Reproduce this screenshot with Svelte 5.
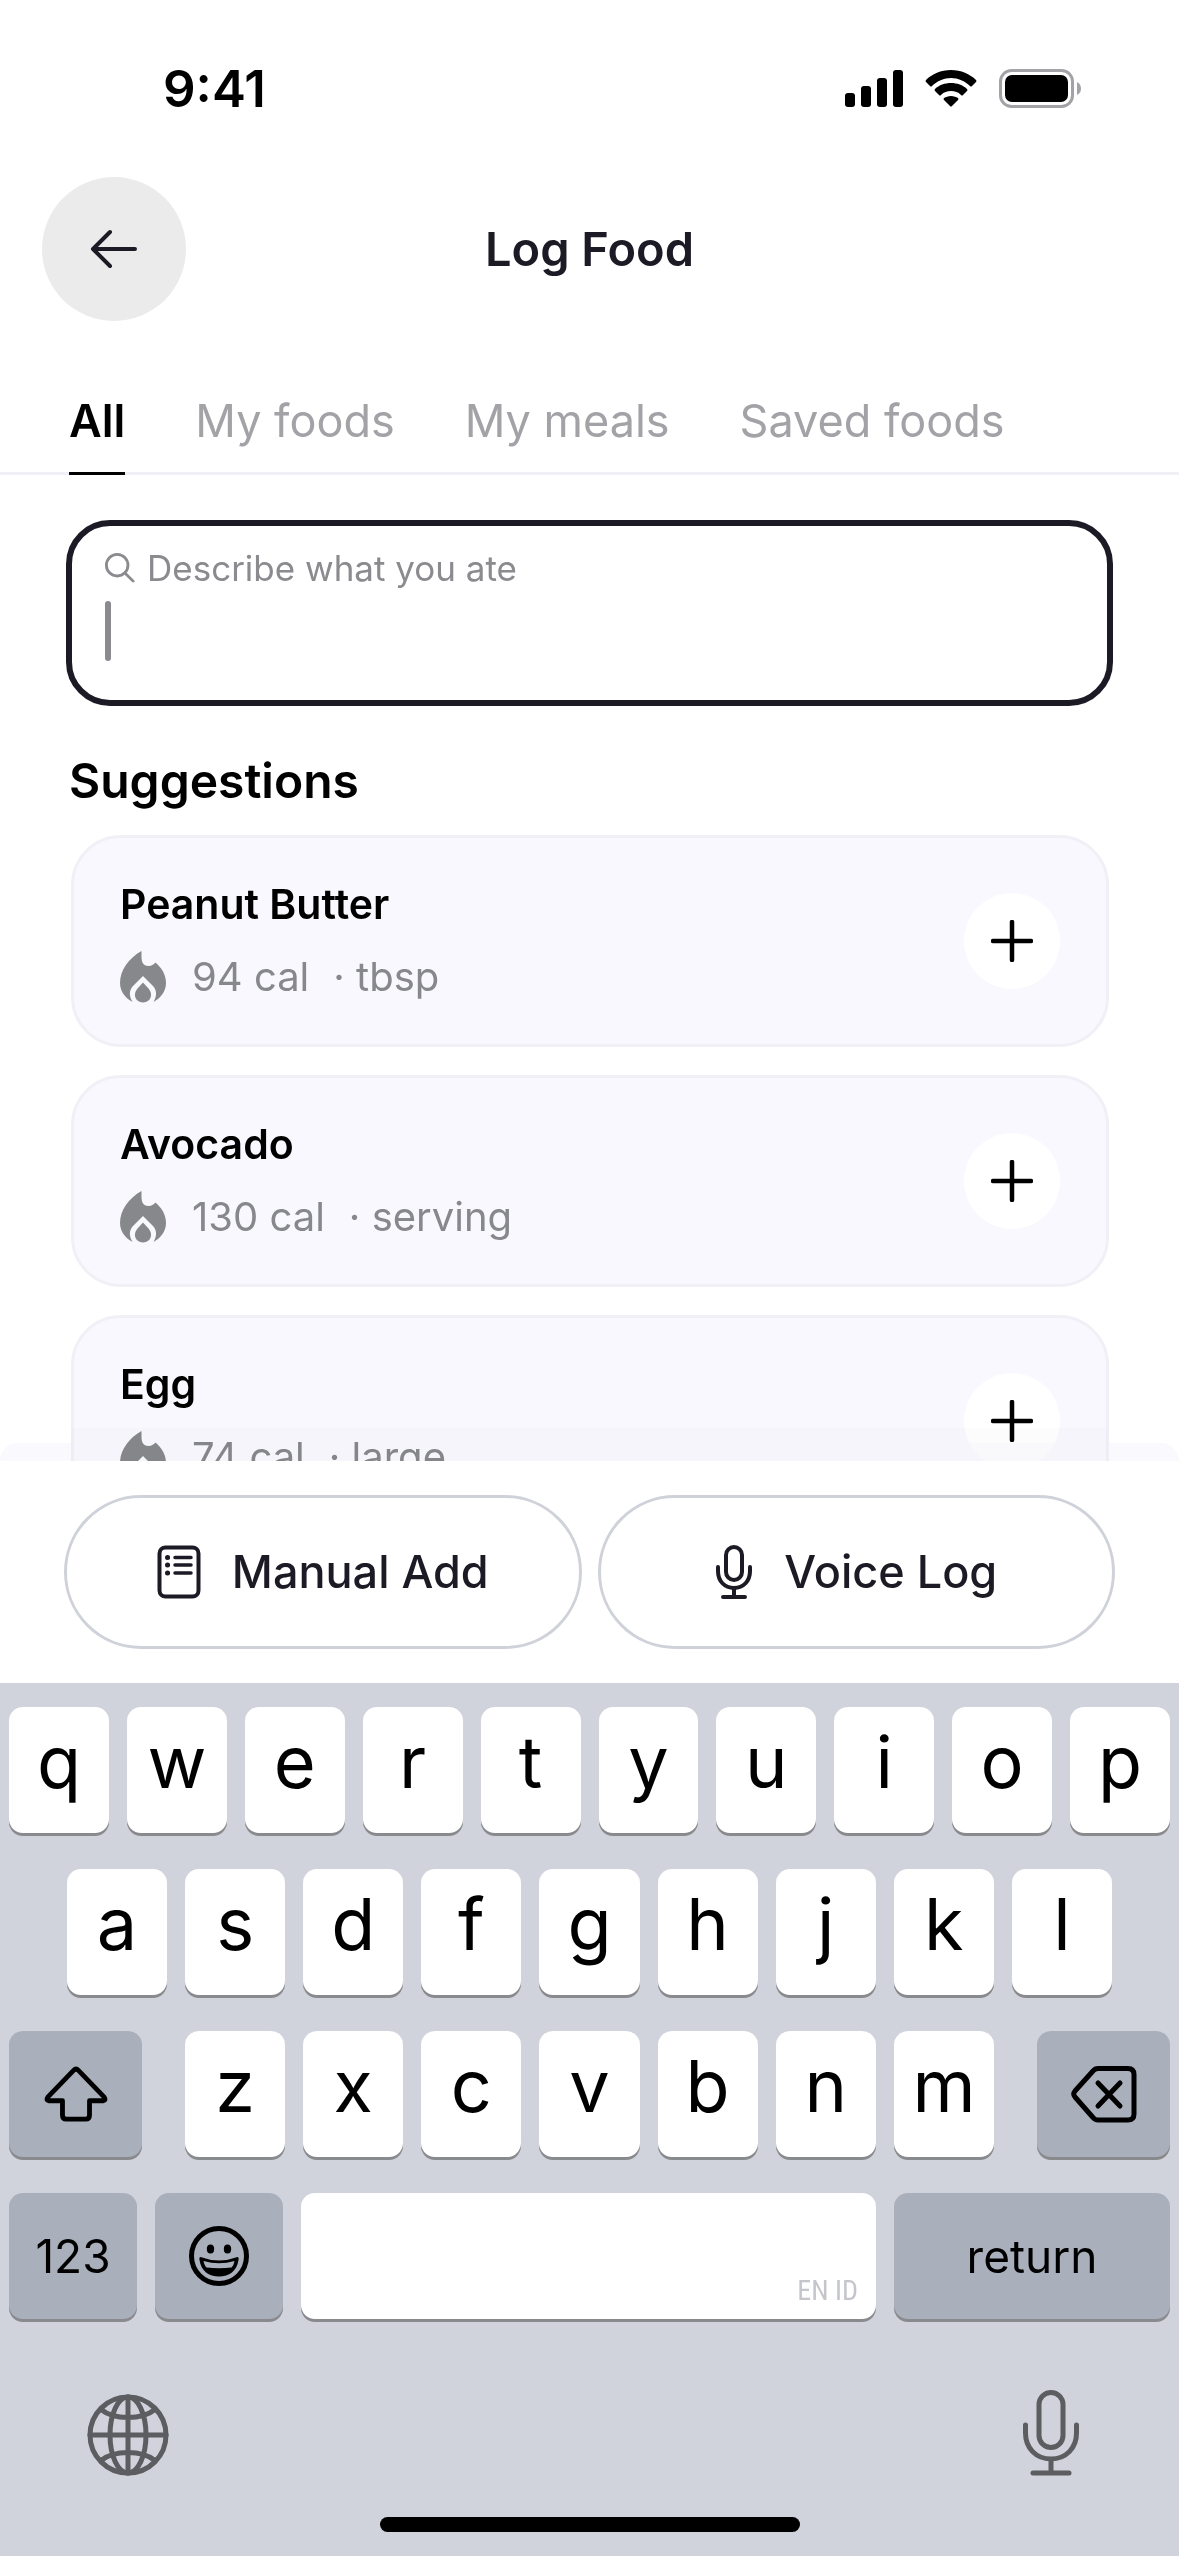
<script lang="ts">
    type Food = { name: string; calories: number; unit: string };

    const tabs = ["All", "My foods", "My meals", "Saved foods"];

    const foods: Food[] = [
        { name: "Peanut Butter", calories: 94, unit: "tbsp" },
        { name: "Avocado", calories: 130, unit: "serving" },
        { name: "Egg", calories: 74, unit: "large" },
    ];

    const topRow = [..."qwertyuiop"];
    const homeRow = [..."asdfghjkl"];
    const bottomRow = [..."zxcvbnm"];

    let activeTab = $state("All");
    let query = $state("");

    const type = (letter: string) => {
        query += letter;
    };

    const erase = () => {
        query = query.slice(0, -1);
    };
</script>

{#snippet letterKey(letter: string)}
    <button class="key" onclick={() => type(letter)}>{letter}</button>
{/snippet}

<div class="screen">
    <header class="status">
        <time>9:41</time>
        <div class="indicators">
            <svg width="58" height="38" viewBox="0 0 58 38" aria-hidden="true">
                <rect x="0" y="23" width="10" height="14" rx="3" />
                <rect x="16" y="16" width="10" height="21" rx="3" />
                <rect x="32" y="8" width="10" height="29" rx="3" />
                <rect x="48" y="0" width="10" height="37" rx="3" />
            </svg>
            <svg width="52" height="38" viewBox="0 0 52 38" aria-hidden="true">
                <path d="M26 0C36 0 45 4 51 10Q52 11 51 12L47 16Q46 17 45 16C40 11 33 8 26 8S12 11 7 16Q6 17 5 16L1 12Q0 11 1 10C7 4 16 0 26 0Z" />
                <path d="M26 13C32 13 38 15 42 19Q43 20 42 21L38 25Q37 26 36 25C33 22 30 21 26 21S19 22 16 25Q15 26 14 25L10 21Q9 20 10 19C14 15 20 13 26 13Z" />
                <path d="M26 26C29 26 31 27 33 28Q34 29 33 30L27 36Q26 37 25 36L19 30Q18 29 19 28C21 27 23 26 26 26Z" />
            </svg>
            <svg width="82" height="40" viewBox="0 0 82 40" aria-hidden="true">
                <rect x="1.5" y="1.5" width="72" height="36" rx="11" fill="none" stroke="#a2a2a7" stroke-width="3" />
                <rect x="6" y="6" width="63" height="27" rx="7" />
                <path d="M78 13Q82 15 82 19.500T78 26Z" fill="#a2a2a7" />
            </svg>
        </div>
    </header>

    <nav class="title-bar">
        <button class="back" aria-label="Back">
            <svg width="48" height="40" viewBox="0 0 48 40" aria-hidden="true">
                <path d="M45 20H3M20 3L3 20L20 37" fill="none" stroke="#1c1a24" stroke-width="4" stroke-linecap="round" stroke-linejoin="round" />
            </svg>
        </button>
        <h1>Log Food</h1>
    </nav>

    <div class="tabs" role="tablist">
        {#each tabs as tab}
            <button
                class="tab"
                class:active={tab === activeTab}
                role="tab"
                aria-selected={tab === activeTab}
                onclick={() => (activeTab = tab)}
            >
                {tab}
            </button>
        {/each}
    </div>

    <main>
        <div class="search">
            <label for="query">
                <svg width="30" height="30" viewBox="0 0 32 32" aria-hidden="true">
                    <circle cx="13" cy="13" r="11.500" />
                    <path d="M21.500 21.500L30 30" />
                </svg>
                Describe what you ate
            </label>
            <div class="entry">
                <span class="caret"></span>
                <input id="query" type="text" bind:value={query} />
            </div>
        </div>

        <h2>Suggestions</h2>
        <ul class="foods">
            {#each foods as food}
                <li class="food">
                    <div class="details">
                        <h3>{food.name}</h3>
                        <p>
                            <svg width="46" height="52" viewBox="0 0 46 52" aria-hidden="true">
                                <path d="M21.500 0V6C21.500 12 24 15 28.500 15C32 15 34 13 35.500 11.500C42 17 46 24 46 32C46 40 41 47 33.500 51C37.500 44 36.500 39 33 35L23 25L13 35C9.500 39 8.500 44 12.500 51C5 47 0 40 0 32C0 19 9 7 21.500 0Z" />
                                <path d="M23 31.500L28.500 37.500C33.500 43 31 51.500 23 51.500S12.500 43 17.500 37.500Z" />
                            </svg>
                            <span>{food.calories} cal</span>
                            <span class="unit">· {food.unit}</span>
                        </p>
                    </div>
                    <button class="add" aria-label="Add {food.name}">
                        <svg width="42" height="42" viewBox="0 0 42 42" aria-hidden="true">
                            <path d="M21 2V40M2 21H40" fill="none" stroke="#000" stroke-width="4.500" stroke-linecap="round" />
                        </svg>
                    </button>
                </li>
            {/each}
        </ul>
        <div class="list-shade"></div>
        <div class="sheet-edge"></div>
    </main>

    <div class="actions">
        <button class="action">
            <svg width="44" height="54" viewBox="0 0 44 54" aria-hidden="true">
                <rect x="2.500" y="2.500" width="39" height="49" rx="6" />
                <path d="M18 12.500H34M18 20H34M18 28H34" stroke-width="3.500" />
                <path d="M10.500 12.500H10.600M10.500 20H10.600M10.500 28H10.600" stroke-width="5" />
            </svg>
            Manual Add
        </button>
        <button class="action">
            <svg width="38" height="54" viewBox="0 0 38 54" aria-hidden="true">
                <rect x="11" y="2" width="16" height="33" rx="8" />
                <path d="M3 22V26C3 36 9.500 43 19 43S35 36 35 26V22M19 43V52M8 52H30" />
            </svg>
            Voice Log
        </button>
    </div>

    <section class="keyboard" aria-label="Keyboard">
        <div class="row">
            {#each topRow as letter}{@render letterKey(letter)}{/each}
        </div>
        <div class="row inset">
            {#each homeRow as letter}{@render letterKey(letter)}{/each}
        </div>
        <div class="row">
            <button class="key dark shift" aria-label="Shift">
                <svg width="64" height="56" viewBox="0 0 66 58" aria-hidden="true">
                    <path d="M30.500 4.500Q33 2 35.500 4.500L62 32Q64.500 35.500 61 36H47V51Q47 55 43 55H23Q19 55 19 51V36H5Q1.500 35.500 4 32Z" />
                </svg>
            </button>
            <div class="letters">
                {#each bottomRow as letter}{@render letterKey(letter)}{/each}
            </div>
            <button class="key dark shift" aria-label="Delete" onclick={erase}>
                <svg width="66" height="58" viewBox="0 0 66 58" aria-hidden="true">
                    <path d="M27 3.500H57Q63 3.500 63 9.500V49Q63 55 57 55H27Q24 55 22 52.500L4 32Q1.500 29 4 26L22 6Q24 3.500 27 3.500Z" />
                    <path d="M27 18L49 41M49 18L27 41" />
                </svg>
            </button>
        </div>
        <div class="row">
            <button class="key dark mode">123</button>
            <button class="key dark mode" aria-label="Emoji">
                <svg width="62" height="62" viewBox="0 0 62 62" aria-hidden="true">
                    <circle cx="31" cy="31" r="27.500" />
                    <ellipse class="solid" cx="22.500" cy="24" rx="3.700" ry="4.500" />
                    <ellipse class="solid" cx="39.500" cy="24" rx="3.700" ry="4.500" />
                    <path class="solid" fill-rule="evenodd" d="M12.500 32Q31 39 49.500 32Q51 32 50.500 35C49 46 41 51.500 31 51.500S13 46 11.500 35Q11 32 12.500 32ZM15.500 36C16 39 17 41 18.500 42.500Q31 44 43.500 42.500Q46 40 46.500 36Q31 40.500 15.500 36Z" />
                </svg>
            </button>
            <button class="key space" aria-label="Space" onclick={() => type(" ")}>
                <span>EN ID</span>
            </button>
            <button class="key dark return">return</button>
        </div>
        <div class="dock">
            <button class="plain" aria-label="Next keyboard">
                <svg width="82" height="82" viewBox="0 0 82 82" aria-hidden="true">
                    <circle cx="41" cy="41" r="38" />
                    <ellipse cx="41" cy="41" rx="18" ry="38" />
                    <path d="M41 3V79M3 41H79M14 15.500Q24 23.500 41 23.500T68 15.500M14 66.500Q24 58.500 41 58.500T68 66.500" />
                </svg>
            </button>
            <button class="plain" aria-label="Dictate">
                <svg width="58" height="86" viewBox="0 0 58 86" aria-hidden="true">
                    <rect x="17" y="2.500" width="24" height="55" rx="12" />
                    <path d="M3.500 35V43C3.500 58 14 69 29 69S54.500 58 54.500 43V35M29 69V83M11 83H47" />
                </svg>
            </button>
        </div>
        <div class="home"></div>
    </section>
</div>

<style>
    :global(body) {
        margin: 0;
        background: #fff;
    }

    .screen {
        min-height: 100vh;
        display: flex;
        flex-direction: column;
        font-family: Inter, sans-serif;
        color: #000;
        background: #fff;
    }

    button {
        padding: 0;
        border: none;
        background: none;
        color: inherit;
        font: inherit;
        cursor: pointer;
    }

    svg {
        display: block;
        flex: none;
    }

    h1,
    h2,
    h3,
    p,
    ul {
        margin: 0;
        padding: 0;
        list-style: none;
    }

    .status {
        display: flex;
        align-items: center;
        justify-content: space-between;
        height: 177px;
        padding: 0 98px 0 163px;
        box-sizing: border-box;
    }

    .status time {
        font-size: 51px;
        line-height: 60px;
        font-weight: 600;
    }

    .indicators {
        display: flex;
        align-items: center;
        gap: 22px;
    }

    .title-bar {
        display: grid;
        grid-template-columns: 144px 1fr 144px;
        align-items: center;
        padding: 0 42px;
    }

    .back {
        display: grid;
        place-items: center;
        width: 144px;
        height: 144px;
        border-radius: 50%;
        background: #ebebeb;
    }

    h1 {
        text-align: center;
        font-size: 47px;
        line-height: 56px;
        font-weight: 600;
        color: #1c1a24;
    }

    .tabs {
        display: flex;
        gap: 70px;
        margin-top: 60px;
        padding: 0 69px;
        border-bottom: 3px solid #f0f0f6;
    }

    .tab {
        height: 94px;
        margin-bottom: -3px;
        padding-bottom: 12px;
        box-sizing: border-box;
        border-bottom: 3px solid transparent;
        font-size: 45px;
        line-height: 56px;
        color: #a2a2a7;
        white-space: nowrap;
    }

    .tab.active {
        border-color: #000;
        color: #000;
        font-weight: 600;
    }

    main {
        position: relative;
        flex: 1 1 0;
        min-height: 600px;
        overflow: hidden;
        padding: 45px 66px 0;
    }

    .search {
        height: 186px;
        box-sizing: border-box;
        padding: 20px 33px;
        border: 6px solid #1c1a24;
        border-radius: 44px;
    }

    .search label {
        display: flex;
        align-items: center;
        gap: 12px;
        font-size: 35px;
        line-height: 44px;
        color: #8a8a8f;
    }

    .search svg {
        fill: none;
        stroke: currentColor;
        stroke-width: 3;
        stroke-linecap: round;
    }

    .entry {
        display: flex;
        align-items: center;
        gap: 8px;
        margin-top: 11px;
    }

    .caret {
        width: 6px;
        height: 60px;
        border-radius: 3px;
        background: #8a8a8f;
    }

    .entry input {
        flex: 1;
        height: 60px;
        padding: 0;
        border: none;
        outline: none;
        background: none;
        font: 46px Inter, sans-serif;
        caret-color: transparent;
    }

    h2 {
        margin: 47px 3px 26px;
        font-size: 48px;
        line-height: 56px;
        font-weight: 600;
    }

    .foods {
        display: grid;
        gap: 28px;
        padding: 0 4px 0 5px;
    }

    .food {
        display: flex;
        align-items: center;
        justify-content: space-between;
        height: 212px;
        box-sizing: border-box;
        padding: 0 46px;
        border: 3px solid #f0f0f6;
        border-radius: 50px;
        background: #f9f8fe;
    }

    .food h3 {
        font-size: 41px;
        line-height: 48px;
        font-weight: 600;
    }

    .food p {
        display: flex;
        align-items: center;
        margin-top: 23px;
        font-size: 40px;
        line-height: 52px;
        color: #87888c;
    }

    .food svg {
        fill: currentColor;
    }

    .food p svg {
        margin-right: 26px;
    }

    .unit {
        margin-left: 24px;
    }

    .add {
        display: grid;
        place-items: center;
        width: 96px;
        height: 96px;
        border-radius: 50%;
        background: #fff;
    }

    /* soft shade and top lip of the action sheet, laid over the scrolling list */
    .list-shade,
    .sheet-edge {
        position: absolute;
        inset: auto 0 0;
        pointer-events: none;
    }

    .list-shade {
        height: 33px;
        margin: 0 71px;
        background: rgba(0, 0, 0, 0.012);
    }

    .sheet-edge {
        height: 18px;
        border-radius: 48px 48px 0 0;
        background: #f9f9fe;
        mix-blend-mode: darken;
    }

    .actions {
        display: grid;
        grid-template-columns: 1fr 1fr;
        gap: 16px;
        padding: 34px 64px;
    }

    .action {
        display: flex;
        align-items: center;
        justify-content: center;
        gap: 31px;
        height: 154px;
        border: 3px solid #d0d2da;
        border-radius: 78px;
        font-size: 45px;
        line-height: 56px;
        font-weight: 500;
        color: #1c1a24;
    }

    .action svg {
        fill: none;
        stroke: currentColor;
        stroke-width: 4;
        stroke-linecap: round;
    }

    .keyboard {
        display: flex;
        flex-direction: column;
        gap: 36px;
        padding: 24px 9px;
        background: #d0d3db;
    }

    .row {
        display: flex;
        gap: 18px;
    }

    .row.inset {
        padding: 0 58px;
    }

    .key {
        display: flex;
        flex: 1 1 0;
        align-items: center;
        justify-content: center;
        min-width: 0;
        height: 126px;
        box-sizing: border-box;
        padding-bottom: 16px;
        border-radius: 14px;
        background: #fff;
        box-shadow: 0 3px 0 #898a8d;
        font-size: 72px;
        line-height: 80px;
    }

    .key.dark {
        padding-bottom: 0;
        background: #a9afbb;
        font-size: 46px;
    }

    .key svg {
        fill: none;
        stroke: #000;
        stroke-width: 5;
        stroke-linecap: round;
        stroke-linejoin: round;
    }

    .key .solid {
        fill: #000;
        stroke: none;
    }

    .key.shift {
        flex: 0 0 133px;
    }

    .letters {
        display: flex;
        flex: 1;
        gap: 18px;
        padding: 0 25px;
    }

    .key.mode {
        flex: 0 0 128px;
    }

    .key.space {
        align-items: flex-end;
        justify-content: flex-end;
        padding: 0 18px 12px;
        font-family: "Liberation Sans Narrow", "Roboto Condensed", "Liberation Sans", sans-serif;
        font-size: 28px;
        line-height: 32px;
        color: #c5c6cb;
    }

    .key.return {
        flex: 0 0 276px;
    }

    .dock {
        display: flex;
        align-items: flex-end;
        justify-content: space-between;
        margin-top: 35px;
        padding: 0 90px 0 78px;
    }

    .plain svg {
        fill: none;
        stroke: #5c5d61;
        stroke-width: 5;
        stroke-linecap: round;
    }

    .home {
        width: 420px;
        height: 15px;
        margin: 5px auto 0;
        border-radius: 8px;
        background: #000;
    }
</style>
